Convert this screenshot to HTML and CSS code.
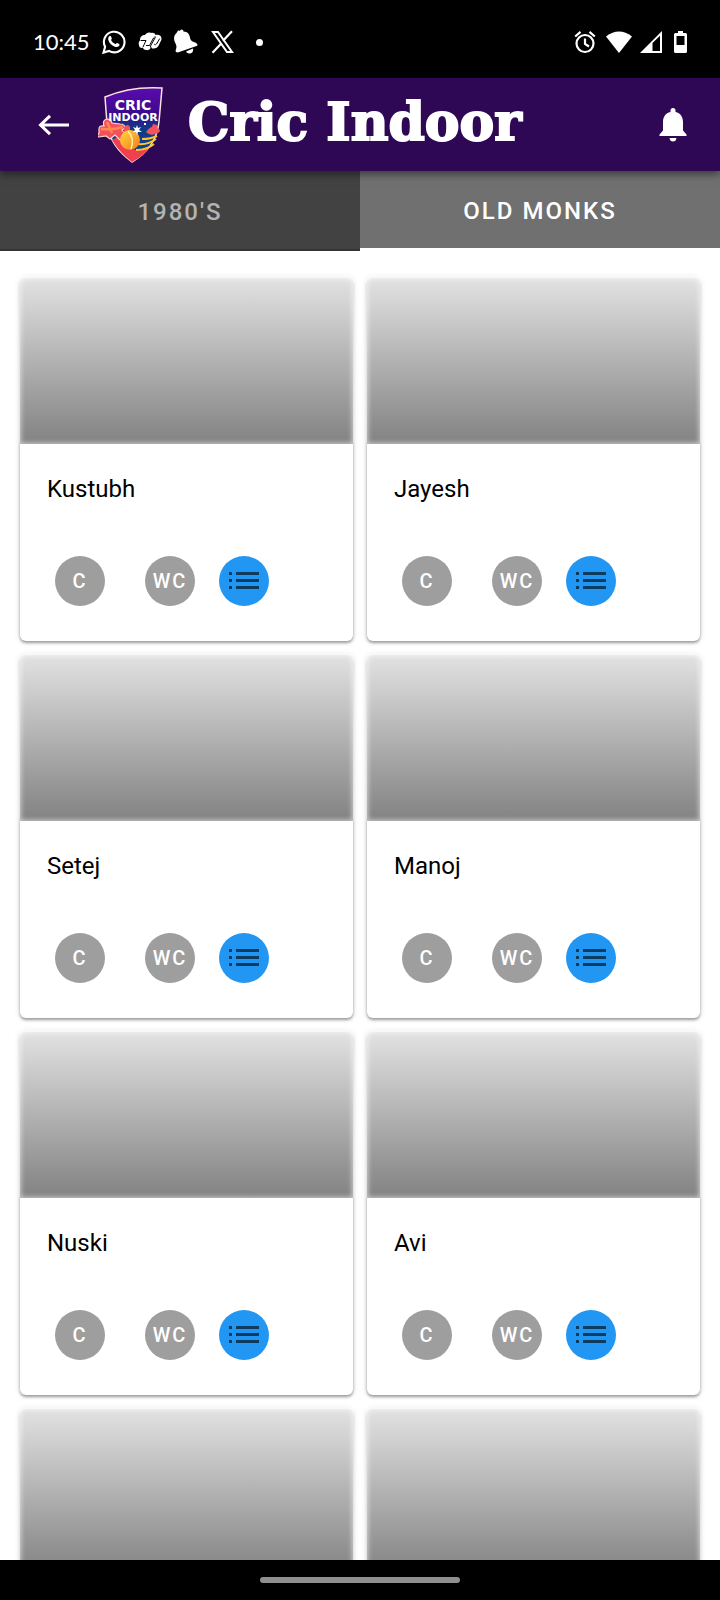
FILE: index.html
```html
<!DOCTYPE html>
<html lang="en">
<head>
<meta charset="utf-8">
<meta name="viewport" content="width=device-width, initial-scale=1">
<title>Cric Indoor</title>
<link rel="stylesheet" href="styles.css">
</head>
<body>
<svg class="defs" width="0" height="0" aria-hidden="true">
  <symbol id="list" viewBox="0 0 32 20">
    <path d="M1 1h3v3H1zM8 1h23v3H8zM1 8h3v3H1zM8 8h23v3H8zM1 15h3v3H1zM8 15h23v3H8z"/>
  </symbol>
</svg>
<div class="screen">
  <div class="status">
    <span class="time">10:45</span>
    <svg class="icon" width="24" height="24" viewBox="0 0 24 24"><path fill="none" stroke="#fff" stroke-width="2.1" d="M1.5 22.6l1.6-5.8A10.3 10.3 0 1 1 7 20.9z"/><path fill="#fff" d="M7.3 6.2c.6-.6 1.4-.5 1.7.2l.8 1.9c.2.6-.7 1.3-.8 1.8 1 1.9 2.4 3.2 4.4 4 .5-.1 1.1-1.3 1.7-1.1l2.1 1c.6.4.3 1.5-.2 2.1-.9 1-2.3 1.2-3.6.8-3.700-1.200-6-3.500-7-6.600-.4-1.500-.2-3.100.9-4.100z"/></svg>
    <svg class="icon" width="24" height="24" viewBox="0 0 24 24"><path fill="#fff" d="M1 15c-1-3 1-4 1-5 0-3 2-5 5-5 1-2 4-3 6-2 2-.5 4 0 4.500 2 3-1 6 .5 6 3.500 0 2-1 3-1.500 4-1 3-3 6-6 6-2 .3-3-1-3-1-1 2-3 3-5 2.500-1.500 0-2.500-1-3-2C2.500 18.500 1 17 1 15z"/><path fill="none" stroke="#000" stroke-width="1" stroke-linecap="round" stroke-linejoin="round" d="M3 10.500h5L5 17M8.500 15.500h3l4-7.500q1-1.500 2-1M13 18l-.5-2 4.500-8M16.500 14.500q1 1 2-.5l3-5"/></svg>
    <svg class="icon" width="24" height="26" viewBox="0 0 24 26"><path fill="#fff" d="M4 1.500l2 .3 1-1.300 2 .6.5 1.300c4 .2 6 2.700 6.500 6 .3 2.600 1.500 4 4.500 4.800 2.500.8 3.500 2.200 2.700 3.600L4.500 23.300c-2.300.6-3.500-.8-2.600-2.800 1-2.300.6-4.500-.6-6.500C-.5 10.500-.6 7 2.500 4zM12 22.600l7-3.200c.6 2.300-.5 4.600-2.700 5.100-1.800.4-3.500-.4-4.300-1.900z"/></svg>
    <svg class="icon" width="24" height="24" viewBox="0 0 24 24"><path fill="none" stroke="#fff" stroke-width="2" d="M3 2h5l14 20h-5z"/><path fill="none" stroke="#fff" stroke-width="2.200" d="M22 1.200l-9 9.600M11.500 13.300l-9 9.500"/></svg>
    <span class="dot"></span>
    <div class="signals push">
      <svg class="icon" width="22" height="24" viewBox="0 0 22 24"><circle cx="11" cy="13.500" r="8.500" fill="none" stroke="#fff" stroke-width="2.200"/><path fill="none" stroke="#fff" stroke-width="2.200" d="M1.200 6.500l5.300-4.600M20.800 6.500l-5.300-4.600M11 8.500v5.500l4 2.500"/></svg>
      <svg class="icon" width="28" height="22" viewBox="0 0 28 22"><path fill="#fff" d="M2 5.500Q15-4.500 28 5.500L15 22z"/></svg>
      <svg class="icon" width="22" height="22" viewBox="0 0 22 22"><path fill="#fff" fill-rule="evenodd" d="M22 0v22H0zM20 4.800L12.500 12v8H20z"/></svg>
    </div>
    <svg class="icon" width="13" height="22" viewBox="0 0 13 22"><path fill="#fff" fill-rule="evenodd" d="M4 0h5v2h2.500Q13 2 13 3.500v17Q13 22 11.500 22h-10Q0 22 0 20.500v-17Q0 2 1.500 2H4zM2.500 5v9h8V5z"/></svg>
  </div>

  <header class="bar">
    <button class="plain" type="button" aria-label="Back"><svg class="icon" width="32" height="22" viewBox="0 0 32 22"><path fill="none" stroke="#fff" stroke-width="3" d="M31 11H3M12 1.800L2.500 11l9.500 9.200"/></svg></button>
    <svg class="logo" width="66" height="78" viewBox="0 0 66 78" role="img" aria-label="Cric Indoor logo">
      <defs>
        <linearGradient id="sky" x1="0" y1="0" x2="0" y2="1"><stop offset="0" stop-color="#5a0bb0"/><stop offset=".35" stop-color="#3c0a8a"/><stop offset=".55" stop-color="#123a86"/><stop offset="1" stop-color="#0c4a8c"/></linearGradient>
        <linearGradient id="ball" x1="0" y1="0" x2="1" y2="1"><stop offset="0" stop-color="#ffd93b"/><stop offset="1" stop-color="#f47a20"/></linearGradient>
      </defs>
      <path d="M7 11Q33 0 64 2L61 36Q58 62 34 76Q12 60 9 38z" fill="url(#sky)" stroke="#fbe3dc" stroke-width="1.500"/>
      <path d="M20 51l10 12 9 1 12-2q-7 9-17 14Q22 67 14 54z" fill="#f0404f"/>
      <path d="M1 43q0-4 5-3-2-6 3-7 4 0 5 4l8 1q5 0 5 4l-3 2 6 8-6 4-7-7-5 4-4-3-7 1q-3-1 0-4z" fill="#f8505a" stroke="#fbd5cf" stroke-width="1.200"/>
      <path d="M3 43q12 1 22-2M9 36l5 11" fill="none" stroke="#ff8a50" stroke-width="2.500"/>
      <path d="M48 46q4-5 6-5l1-3 4 1v3l3 2q0 3-5 4-5 2-9-2zM26 46v-5q4-4 6 0v7z" fill="#f5525b"/>
      <path d="M40 58q10 1 18-5M38 64q11 0 18-6M44 53q9 0 15-3" fill="none" stroke="#ffc72c" stroke-width="2"/>
      <circle cx="32" cy="54" r="10" fill="url(#ball)"/><path d="M30 45q7 8 3 18" fill="none" stroke="#fff0a0" stroke-width="1.500"/>
      <path fill="#fff" d="M39 39l1 3 3-1-2 3 3 2-4 0-1 3-1-3-3 0 2-2-2-3 3 1zM46 37h2v2h-2z"/>
      <text class="logo-text" x="35" y="24" font-size="14" text-anchor="middle">CRIC</text>
      <text class="logo-text" x="35" y="35" font-size="11" text-anchor="middle">INDOOR</text>
    </svg>
    <h1 class="title">Cric Indoor</h1>
    <button class="plain push" type="button" aria-label="Notifications"><svg class="icon" width="28" height="34" viewBox="0 0 28 34"><path fill="#fff" d="M11.500 4V2.500a2.500 2.500 0 0 1 5 0V4C21.500 5 24 9 24 14v8.500l3.500 4V28H.5v-1.500l3.500-4V14C4 9 6.500 5 11.500 4zM10.500 30h7q-.5 3.500-3.500 3.500t-3.500-3.500z"/></svg></button>
  </header>

  <nav class="tabs" aria-label="Teams">
    <button class="tab" type="button">1980'S</button>
    <button class="tab active" type="button">OLD MONKS</button>
  </nav>

  <main class="grid">
    <article class="card"><div class="photo"></div><div class="body"><h2 class="name">Kustubh</h2><div class="actions"><button class="round" type="button">C</button><button class="round wc" type="button">WC</button><button class="round blue" type="button" aria-label="Details"><svg class="icon" width="32" height="20"><use href="#list"/></svg></button></div></div></article>
    <article class="card"><div class="photo"></div><div class="body"><h2 class="name">Jayesh</h2><div class="actions"><button class="round" type="button">C</button><button class="round wc" type="button">WC</button><button class="round blue" type="button" aria-label="Details"><svg class="icon" width="32" height="20"><use href="#list"/></svg></button></div></div></article>
    <article class="card"><div class="photo"></div><div class="body"><h2 class="name">Setej</h2><div class="actions"><button class="round" type="button">C</button><button class="round wc" type="button">WC</button><button class="round blue" type="button" aria-label="Details"><svg class="icon" width="32" height="20"><use href="#list"/></svg></button></div></div></article>
    <article class="card"><div class="photo"></div><div class="body"><h2 class="name">Manoj</h2><div class="actions"><button class="round" type="button">C</button><button class="round wc" type="button">WC</button><button class="round blue" type="button" aria-label="Details"><svg class="icon" width="32" height="20"><use href="#list"/></svg></button></div></div></article>
    <article class="card"><div class="photo"></div><div class="body"><h2 class="name">Nuski</h2><div class="actions"><button class="round" type="button">C</button><button class="round wc" type="button">WC</button><button class="round blue" type="button" aria-label="Details"><svg class="icon" width="32" height="20"><use href="#list"/></svg></button></div></div></article>
    <article class="card"><div class="photo"></div><div class="body"><h2 class="name">Avi</h2><div class="actions"><button class="round" type="button">C</button><button class="round wc" type="button">WC</button><button class="round blue" type="button" aria-label="Details"><svg class="icon" width="32" height="20"><use href="#list"/></svg></button></div></div></article>
    <article class="card"><div class="photo"></div></article>
    <article class="card"><div class="photo"></div></article>
  </main>

  <div class="home"><span class="handle"></span></div>
</div>
</body>
</html>
```
FILE: styles.css
```css
* { box-sizing: border-box; }
body { margin: 0; background: #fff; font-family: Roboto, sans-serif; color: #000; }
button { font: inherit; border: 0; padding: 0; cursor: pointer; }
.defs { position: absolute; }
.icon { display: block; flex: none; }
.push { margin-left: auto; }

.screen { display: flex; flex-direction: column; height: 100vh; overflow: hidden; }

.status { display: flex; align-items: center; gap: 12px; flex: none; padding: 27px 33px 21px 33px; background: #000; color: #fff; line-height: 30px; }
.time { font-family: Lato, sans-serif; font-size: 22px; }
.dot { width: 7px; height: 7px; margin-left: 10px; border-radius: 50%; background: #fff; }
.signals { display: flex; align-items: center; gap: 8px; }

.bar { position: relative; z-index: 1; display: flex; align-items: center; flex: none; padding: 8px 33px 7px 38px; background: #2e0854; box-shadow: 0 3px 8px rgba(0, 0, 0, .5); }
.plain { background: none; }
.logo { margin: 0 24px 0 28px; }
.logo-text { font-family: "DejaVu Sans", sans-serif; font-weight: 700; fill: #fff; }
.title { margin: 0; padding-bottom: 6px; font-family: "DejaVu Serif", serif; font-size: 52px; line-height: 60px; font-weight: 700; color: #fff; -webkit-text-stroke: 2px #fff; white-space: nowrap; }

.tabs { display: grid; grid-template-columns: 1fr 1fr; align-items: start; flex: none; height: 80px; }
.tab { height: 80px; padding-top: 3px; background: #424242; color: #b3b3b3; border-bottom: 2px solid #353535; font-size: 24px; font-weight: 500; letter-spacing: 2px; }
.tab.active { height: 77px; background: #707070; color: #fff; border-bottom: 0; }

.grid { display: grid; grid-template-columns: 1fr 1fr; align-content: start; gap: 14px; flex: 1; min-height: 0; overflow: hidden; padding: 27px 20px 0; }
.card { border-radius: 6px; background: #fff; box-shadow: 0 2px 3px rgba(0, 0, 0, .35), 0 0 6px rgba(0, 0, 0, .14); }
.photo { height: 166px; border-radius: 6px 6px 0 0; background: linear-gradient(#e2e2e2, #828282); box-shadow: inset 0 0 5px 1px rgba(255, 255, 255, .6), 0 -1px 4px #fff; }
.body { padding: 28px 27px 35px; }
.name { margin: 0 0 50px; font-size: 24px; line-height: 34px; font-weight: 400; }
.actions { display: flex; align-items: center; padding-left: 8px; }
.round { display: flex; align-items: center; justify-content: center; width: 50px; height: 50px; border-radius: 50%; background: #9e9e9e; color: #fff; font-size: 20px; font-weight: 500; letter-spacing: 2px; }
.wc { margin: 0 24px 0 40px; }
.blue { background: #2196f3; fill: #0d3c61; }

.home { display: flex; align-items: center; justify-content: center; flex: none; height: 40px; background: #000; }
.handle { width: 200px; height: 6px; border-radius: 3px; background: #8f8f8f; }
```
